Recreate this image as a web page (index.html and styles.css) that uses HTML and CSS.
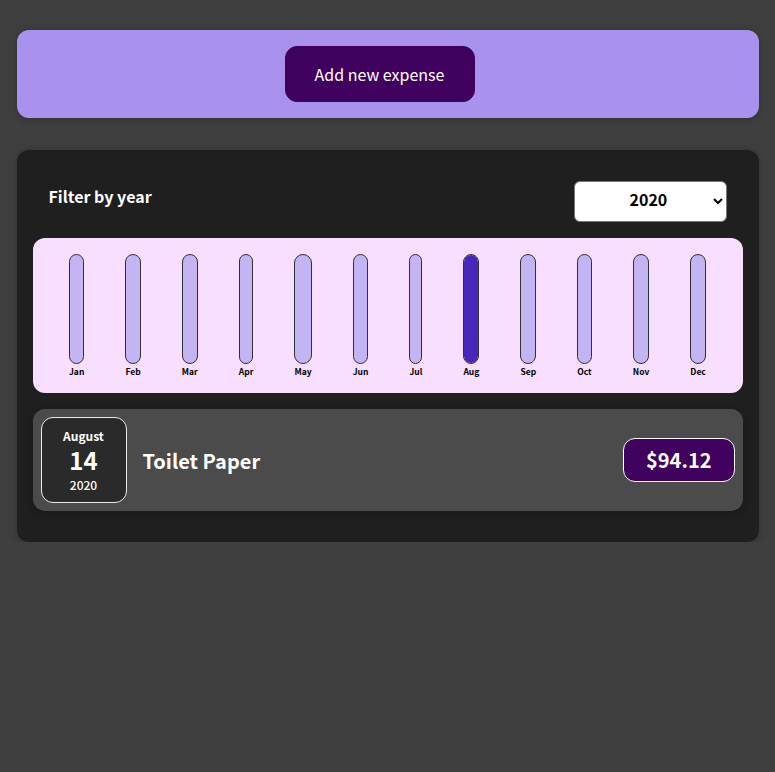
FILE: index.html
```html
<!DOCTYPE html>
<html lang="en">
<head>
<meta charset="utf-8">
<title>Expenses</title>
<link rel="stylesheet" href="styles.css">
</head>
<body>
<div class="new-expense">
  <button class="new-expense__btn">Add new expense</button>
</div>
<div class="expenses">
  <div class="filter">
    <div class="filter__control">
      <label class="filter__label">Filter by year</label>
      <select class="filter__select">
        <option>2022</option>
        <option>2021</option>
        <option selected>2020</option>
        <option>2019</option>
      </select>
    </div>
  </div>
  <div class="chart">
    <div class="bar"><div class="bar__inner"><div class="bar__fill" style="height:0%"></div></div><div class="bar__label">Jan</div></div>
    <div class="bar"><div class="bar__inner"><div class="bar__fill" style="height:0%"></div></div><div class="bar__label">Feb</div></div>
    <div class="bar"><div class="bar__inner"><div class="bar__fill" style="height:0%"></div></div><div class="bar__label">Mar</div></div>
    <div class="bar"><div class="bar__inner"><div class="bar__fill" style="height:0%"></div></div><div class="bar__label">Apr</div></div>
    <div class="bar"><div class="bar__inner"><div class="bar__fill" style="height:0%"></div></div><div class="bar__label">May</div></div>
    <div class="bar"><div class="bar__inner"><div class="bar__fill" style="height:0%"></div></div><div class="bar__label">Jun</div></div>
    <div class="bar"><div class="bar__inner"><div class="bar__fill" style="height:0%"></div></div><div class="bar__label">Jul</div></div>
    <div class="bar"><div class="bar__inner"><div class="bar__fill" style="height:100%"></div></div><div class="bar__label">Aug</div></div>
    <div class="bar"><div class="bar__inner"><div class="bar__fill" style="height:0%"></div></div><div class="bar__label">Sep</div></div>
    <div class="bar"><div class="bar__inner"><div class="bar__fill" style="height:0%"></div></div><div class="bar__label">Oct</div></div>
    <div class="bar"><div class="bar__inner"><div class="bar__fill" style="height:0%"></div></div><div class="bar__label">Nov</div></div>
    <div class="bar"><div class="bar__inner"><div class="bar__fill" style="height:0%"></div></div><div class="bar__label">Dec</div></div>
  </div>
  <div class="item">
    <div class="date">
      <div class="date__month">August</div>
      <div class="date__day">14</div>
      <div class="date__year">2020</div>
    </div>
    <div class="item__desc">
      <h2 class="item__title">Toilet Paper</h2>
      <div class="item__price">$94.12</div>
    </div>
  </div>
</div>
</body>
</html>
```
FILE: styles.css
```css
html {
  font-family: "Noto Sans CJK JP", "Noto Sans", sans-serif;
}
body {
  margin: 0;
  background-color: #3f3f3f;
}
.new-expense {
  background-color: #a892ee;
  padding: 16px;
  margin: 30px auto 32px;
  width: 742px;
  box-sizing: border-box;
  border-radius: 12px;
  text-align: center;
  box-shadow: 0 1px 8px rgba(0, 0, 0, 0.25);
}
.new-expense__btn {
  font: inherit;
  font-size: 16px;
  line-height: 22px;
  cursor: pointer;
  padding: 0;
  white-space: nowrap;
  border: 1px solid #40005d;
  background-color: #40005d;
  color: white;
  border-radius: 12px;
  margin-right: 16px;
  height: 56px;
  width: 190px;
  box-sizing: border-box;
  vertical-align: top;
}
.expenses {
  background-color: #1f1f1f;
  padding: 16px;
  margin: 0 auto;
  width: 742px;
  box-sizing: border-box;
  border-radius: 12px;
  box-shadow: 0 1px 8px rgba(0, 0, 0, 0.25);
}
.filter {
  color: white;
  padding: 0 16px;
}
.filter__control {
  display: flex;
  align-items: center;
  justify-content: space-between;
  margin: 15px 0 16px;
}
.filter__label {
  font-weight: bold;
  font-size: 16px;
  margin-bottom: 12px;
}
.filter__select {
  font: inherit;
  font-weight: bold;
  font-size: 16px;
  padding: 4px 4px 10px 51px;
  border-radius: 6px;
  width: 153px;
  height: 41px;
  box-sizing: border-box;
  background: white;
  color: black;
  border: 1px solid #767676;
}
.chart {
  padding: 16px;
  border-radius: 12px;
  background-color: #f8dfff;
  text-align: center;
  display: flex;
  justify-content: space-around;
  height: 155px;
  box-sizing: border-box;
}
.bar {
  height: 100%;
  display: flex;
  flex-direction: column;
  align-items: center;
}
.bar__inner {
  height: 113px;
  width: 100%;
  box-sizing: border-box;
  border: 1px solid #313131;
  border-radius: 12px;
  background-color: #c3b4f3;
  display: flex;
  flex-direction: column;
  justify-content: flex-end;
  overflow: hidden;
}
.bar__fill {
  background-color: #4826b9;
  width: 100%;
}
.bar__label {
  font-weight: bold;
  font-size: 8.5px;
  line-height: 12px;
  margin-top: 1px;
  color: #000;
}
.item {
  display: flex;
  align-items: center;
  padding: 8px;
  margin: 16px 0 15px;
  border-radius: 12px;
  background-color: #4b4b4b;
  box-shadow: 0 2px 8px rgba(0, 0, 0, 0.25);
}
.date {
  display: flex;
  flex-direction: column;
  width: 86px;
  height: 86px;
  box-sizing: border-box;
  border: 1px solid #ececec;
  background-color: #2a2a2a;
  color: white;
  border-radius: 12px;
  align-items: center;
  justify-content: center;
}
.date__month {
  font-size: 12px;
  font-weight: bold;
  line-height: 17px;
}
.date__day {
  font-size: 24px;
  font-weight: bold;
  line-height: 32px;
}
.date__year {
  font-size: 12px;
  font-weight: 500;
  line-height: 17px;
}
.item__desc {
  display: flex;
  align-items: center;
  flex: 1;
}
.item__title {
  color: white;
  font-size: 20px;
  flex: 1;
  margin: 0 16px;
}
.item__price {
  font-size: 20px;
  font-weight: bold;
  line-height: 26px;
  color: white;
  background-color: #40005d;
  border: 1px solid white;
  padding: 8px 22px;
  border-radius: 12px;
}
```
